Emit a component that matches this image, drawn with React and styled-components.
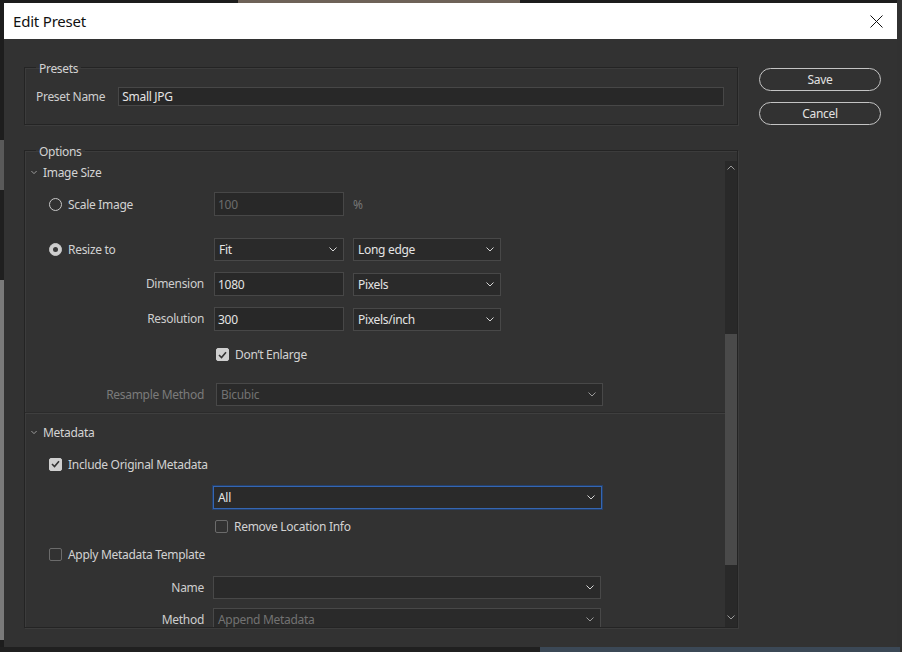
import React from 'react';
import styled, { createGlobalStyle } from 'styled-components';

const Global = createGlobalStyle`
  html, body { margin: 0; padding: 0; }
  body {
    background: #262626;
    font-family: "Noto Sans", "Open Sans", sans-serif;
    letter-spacing: -0.3px;
    width: 902px; height: 652px; overflow: hidden;
  }
  * { box-sizing: border-box; }
`;

const FS = '12px';

const Desktop = styled.div`
  width: 902px;
  height: 652px;
  padding: 3px 5px 5px 4px;
  background:
    linear-gradient(90deg, transparent 0 540px, #3b4856 540px 900px, transparent 900px) bottom / 100% 5px no-repeat,
    linear-gradient(90deg, transparent 0 897px, #313131 897px),
    linear-gradient(180deg, transparent 0 647px, #202020 647px),
    linear-gradient(90deg, transparent 0 238px, #6e6258 238px 520px, #1d1d1d 520px 770px, transparent 770px) top / 100% 3px no-repeat,
    linear-gradient(180deg, #1d1d1d 0 140px, #5a5a5a 140px 190px, #1f1f1f 190px 280px, #7a7a7a 280px 640px, #1d1d1d 640px) left / 4px 100% no-repeat,
    #1d1d1d;
`;

const Dialog = styled.div`
  width: 893px;
  height: 644px;
  display: flex;
  flex-direction: column;
  background: #323232;
`;

const TitleBar = styled.div`
  height: 36px;
  flex: none;
  background: #ffffff;
  display: flex;
  align-items: center;
  justify-content: space-between;
  padding: 0 14px 0 9px;
`;

const Title = styled.div`
  font-size: 15px;
  letter-spacing: -0.2px;
  color: #111;
`;

const CloseButton = styled.div`
  width: 14px;
  height: 14px;
  display: flex;
  align-items: center;
  justify-content: center;
`;

const Body = styled.div`
  flex: 1;
  min-height: 0;
  display: grid;
  grid-template-columns: 714px 122px;
  column-gap: 21px;
  padding: 18px 16px 19px 20px;
`;

const MainCol = styled.div`
  display: flex;
  flex-direction: column;
  min-height: 0;
`;

const Group = styled.fieldset`
  margin: 0;
  min-width: 0;
  border: 1px solid #242424;
  box-shadow: inset 1px 1px 0 #3c3c3c, 1px 1px 0 #3c3c3c;
  padding: ${p => p.$pad || '0'};
  ${p => p.$grow && 'flex: 1; min-height: 0; display: flex; margin-top: 15px;'}
`;

const Legend = styled.legend`
  font-size: ${FS};
  line-height: 16px;
  color: #d2d2d2;
  padding: 4px 3px 0;
  margin-left: 11px;
`;

const PresetRow = styled.div`
  display: flex;
  align-items: center;
  gap: 13px;
  padding-left: 11px;
`;

const Label = styled.div`
  font-size: ${FS};
  line-height: 16px;
  color: ${p => (p.$disabled ? '#7b7b7b' : '#cecece')};
  white-space: nowrap;
  text-align: ${p => (p.$right ? 'right' : 'left')};
`;

const TextInput = styled.div`
  width: ${p => p.$w}px;
  height: ${p => p.$h || 24}px;
  flex: ${p => (p.$grow ? '1' : 'none')};
  background: #282828;
  border: 1px solid #474747;
  display: flex;
  align-items: center;
  padding-left: 3px;
  font-size: ${FS};
  color: ${p => (p.$disabled ? '#6c6c6c' : '#e4e4e4')};
  margin-left: ${p => p.$ml || 0}px;
`;

const SelectBox = styled.div`
  width: ${p => p.$w}px;
  height: 23px;
  flex: none;
  background: #2a2a2a;
  border: 1px solid ${p => (p.$focus ? '#3566b2' : '#484848')};
  box-shadow: ${p => (p.$focus ? '0 0 0 1px #24406b' : 'none')};
  display: flex;
  align-items: center;
  justify-content: space-between;
  padding: 0 6px 0 4px;
  font-size: ${FS};
  color: ${p => (p.$disabled ? '#727272' : '#e4e4e4')};
  margin-left: ${p => p.$ml || 0}px;
`;

const Chevron = ({ color = '#cfcfcf', w = 8 }) => (
  <svg width={w} height="5" viewBox="0 0 8 5" style={{ display: 'block' }}>
    <path d="M0.5 0.5 L4 4 L7.5 0.5" fill="none" stroke={color} strokeWidth="1" />
  </svg>
);

const Select = ({ w, children, disabled, focus, ml }) => (
  <SelectBox $w={w} $disabled={disabled} $focus={focus} $ml={ml}>
    <span>{children}</span>
    <Chevron color={disabled ? '#9a9a9a' : '#d6d6d6'} />
  </SelectBox>
);

const ButtonCol = styled.div`
  display: flex;
  flex-direction: column;
  gap: 11px;
  padding-top: 11px;
`;

const Button = styled.div`
  height: 23px;
  border: 1px solid #c4c4c4;
  border-radius: 12px;
  display: flex;
  align-items: center;
  justify-content: center;
  font-size: ${FS};
  color: #e2e2e2;
`;

const ScrollArea = styled.div`
  flex: 1;
  min-height: 0;
  display: flex;
`;

const ScrollContent = styled.div`
  flex: 1;
  min-width: 0;
  overflow: hidden;
  display: flex;
  flex-direction: column;
`;

const ScrollBar = styled.div`
  width: 12px;
  flex: none;
  margin-top: 1px;
  background: #292929;
  display: flex;
  flex-direction: column;
  position: relative;
`;

const ScrollArrow = styled.div`
  position: absolute;
  left: 0;
  right: 0;
  height: 12px;
  display: flex;
  align-items: center;
  justify-content: center;
  ${p => (p.$down ? 'bottom: 4px;' : 'top: 0;')}
`;

const Thumb = styled.div`
  margin-top: ${p => p.$top}px;
  height: ${p => p.$h}px;
  background: #4a4a4a;
`;

const Row = styled.div`
  flex: none;
  height: ${p => p.$h || 24}px;
  margin-top: ${p => p.$mt}px;
  display: grid;
  grid-template-columns: 179px 1fr;
  column-gap: 10px;
  align-items: center;
`;

const Cell = styled.div`
  display: flex;
  align-items: center;
  gap: ${p => p.$gap || 0}px;
  padding-left: ${p => p.$pl || 0}px;
  justify-content: ${p => (p.$right ? 'flex-end' : 'flex-start')};
  min-width: 0;
`;

const SectionHeader = styled.div`
  flex: none;
  height: 22px;
  margin-top: ${p => p.$mt}px;
  display: flex;
  align-items: center;
  gap: 6px;
  padding-left: 6px;
  font-size: ${FS};
  color: #d4d4d4;
`;

const Separator = styled.div`
  flex: none;
  height: 1px;
  margin-top: ${p => p.$mt}px;
  background: #3f3f3f;
  box-shadow: 0 -1px 0 #2b2b2b;
`;

const Option = styled.div`
  display: flex;
  align-items: center;
  gap: 6px;
  font-size: ${FS};
  color: #d2d2d2;
  white-space: nowrap;
`;

const RadioCircle = styled.div`
  width: 13px;
  height: 13px;
  border-radius: 50%;
  border: 1px solid #c8c8c8;
  background: ${p => (p.$checked ? '#cfcfcf' : 'transparent')};
  display: flex;
  align-items: center;
  justify-content: center;
  &::after {
    content: '';
    width: 5px;
    height: 5px;
    border-radius: 50%;
    background: ${p => (p.$checked ? '#3a3a3a' : 'transparent')};
  }
`;

const CheckSquare = styled.div`
  width: 13px;
  height: 13px;
  border-radius: 2px;
  border: 1px solid ${p => (p.$checked ? '#cfcfcf' : '#6b6b6b')};
  background: ${p => (p.$checked ? '#cfcfcf' : 'transparent')};
  display: flex;
  align-items: center;
  justify-content: center;
`;

const Radio = ({ checked, children }) => (
  <Option>
    <RadioCircle $checked={checked} />
    <span>{children}</span>
  </Option>
);

const Check = ({ checked, children }) => (
  <Option>
    <CheckSquare $checked={checked}>
      {checked && (
        <svg width="9" height="8" viewBox="0 0 9 8">
          <path d="M1 4 L3.5 6.5 L8 1.2" fill="none" stroke="#333" strokeWidth="1.6" />
        </svg>
      )}
    </CheckSquare>
    <span>{children}</span>
  </Option>
);

const Unit = styled.span`
  font-size: ${FS};
  color: #777;
  margin-left: 9px;
`;

export default function App() {
  return (
    <>
      <Global />
      <Desktop>
        <Dialog>
          <TitleBar>
            <Title>Edit Preset</Title>
            <CloseButton>
              <svg width="13" height="13" viewBox="0 0 13 13">
                <path d="M0.5 0.5 L12.5 12.5 M12.5 0.5 L0.5 12.5" stroke="#111" strokeWidth="1" />
              </svg>
            </CloseButton>
          </TitleBar>
          <Body>
            <MainCol>
              <Group $pad="10px 13px 18px 0">
                <Legend>Presets</Legend>
                <PresetRow>
                  <Label>Preset Name</Label>
                  <TextInput $grow $h={19}>Small JPG</TextInput>
                </PresetRow>
              </Group>
              <Group $grow>
                <Legend>Options</Legend>
                <ScrollArea>
                  <ScrollContent>
                    <SectionHeader $mt={1}>
                      <Chevron w={6} color="#bdbdbd" />
                      <span>Image Size</span>
                    </SectionHeader>
                    <Row $mt={9}>
                      <Cell $pl={24}><Radio>Scale Image</Radio></Cell>
                      <Cell>
                        <TextInput $w={130} $disabled>100</TextInput>
                        <Unit>%</Unit>
                      </Cell>
                    </Row>
                    <Row $mt={22} $h={23}>
                      <Cell $pl={24}><Radio checked>Resize to</Radio></Cell>
                      <Cell $gap={9}>
                        <Select w={130}>Fit</Select>
                        <Select w={148}>Long edge</Select>
                      </Cell>
                    </Row>
                    <Row $mt={11}>
                      <Cell $right><Label $right>Dimension</Label></Cell>
                      <Cell $gap={9}>
                        <TextInput $w={130}>1080</TextInput>
                        <Select w={148}>Pixels</Select>
                      </Cell>
                    </Row>
                    <Row $mt={11}>
                      <Cell $right><Label $right>Resolution</Label></Cell>
                      <Cell $gap={9}>
                        <TextInput $w={130}>300</TextInput>
                        <Select w={148}>Pixels/inch</Select>
                      </Cell>
                    </Row>
                    <Row $mt={12} $h={23}>
                      <Cell />
                      <Cell $pl={2}><Check checked>Don’t Enlarge</Check></Cell>
                    </Row>
                    <Row $mt={17} $h={23}>
                      <Cell $right><Label $right $disabled>Resample Method</Label></Cell>
                      <Cell><Select w={387} ml={2} disabled>Bicubic</Select></Cell>
                    </Row>
                    <Separator $mt={7} />
                    <SectionHeader $mt={7}>
                      <Chevron w={6} color="#bdbdbd" />
                      <span>Metadata</span>
                    </SectionHeader>
                    <Row $mt={10} $h={22}>
                      <Cell $pl={24}><Check checked>Include Original Metadata</Check></Cell>
                      <Cell />
                    </Row>
                    <Row $mt={11} $h={23}>
                      <Cell />
                      <Cell><Select w={389} ml={-1} focus>All</Select></Cell>
                    </Row>
                    <Row $mt={6} $h={22}>
                      <Cell />
                      <Cell $pl={1}><Check>Remove Location Info</Check></Cell>
                    </Row>
                    <Row $mt={6} $h={22}>
                      <Cell $pl={24}><Check>Apply Metadata Template</Check></Cell>
                      <Cell />
                    </Row>
                    <Row $mt={11} $h={23}>
                      <Cell $right><Label $right>Name</Label></Cell>
                      <Cell><Select w={388} ml={-1}></Select></Cell>
                    </Row>
                    <Row $mt={9} $h={23}>
                      <Cell $right><Label $right>Method</Label></Cell>
                      <Cell><Select w={388} ml={-1} disabled>Append Metadata</Select></Cell>
                    </Row>
                  </ScrollContent>
                  <ScrollBar>
                    <ScrollArrow>
                      <svg width="8" height="5" viewBox="0 0 8 5"><path d="M0.5 4.5 L4 1 L7.5 4.5" fill="none" stroke="#9a9a9a" /></svg>
                    </ScrollArrow>
                    <Thumb $top={173} $h={231} />
                    <ScrollArrow $down>
                      <Chevron color="#9a9a9a" />
                    </ScrollArrow>
                  </ScrollBar>
                </ScrollArea>
              </Group>
            </MainCol>
            <ButtonCol>
              <Button>Save</Button>
              <Button>Cancel</Button>
            </ButtonCol>
          </Body>
        </Dialog>
      </Desktop>
    </>
  );
}
